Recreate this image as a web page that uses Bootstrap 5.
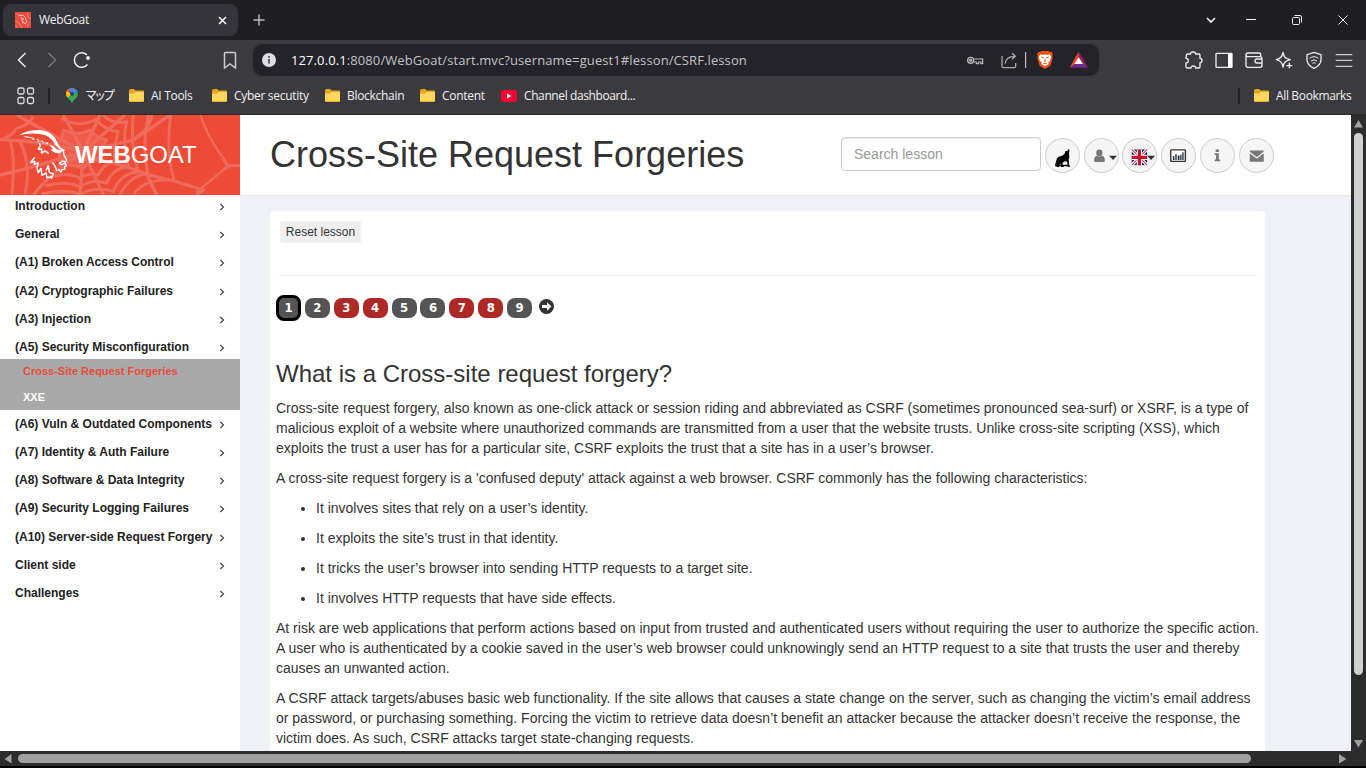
<!DOCTYPE html>
<html lang="en">
<head>
<meta charset="utf-8">
<title>WebGoat</title>
<link rel="stylesheet" href="https://cdn.jsdelivr.net/npm/bootstrap@5.3.0/dist/css/bootstrap.min.css">
<script src="https://cdn.jsdelivr.net/npm/bootstrap@5.3.0/dist/js/bootstrap.bundle.min.js"></script>
<style>
body{height:768px;width:1366px;background:#000;color:#333;font:14px/20px "Liberation Sans",Arial,sans-serif}
svg{display:block;flex:none}
.ui{font-family:"Open Sans","Noto Sans CJK JP",sans-serif;color:#f1f1f3;font-size:12px;white-space:nowrap}
.titlebar{height:40px;background:#1f1e23}
.tab{width:235px;height:32px;margin:4px 0 0 3px;border-radius:8px;background:#35343a}
.tab-icon{margin-left:12px}
.tab-name{margin-left:8px;letter-spacing:-.3px}
.tab-close{margin-right:11px}
.toolbar{height:40px;background:#3b3a3f}
.address{width:846px;height:32px;background:#242329;border-radius:9px;font-size:13px;color:#c3c2c8}
.address .site-info{margin:0 15px 0 9px}
.url{letter-spacing:.1px}
.marks{height:35px;background:#3b3a3f;border-bottom:1px solid #2b2a2f;padding-bottom:3px}
.apps{margin:0 13px 0 17px}
.map-mark{margin-left:16px;width:63px}
.map-mark .jp{letter-spacing:-3px;margin-left:7px}
.bm-label{letter-spacing:-.3px;margin-left:-1px}
.vbar{width:2px;height:16px;background:#222126}
.view{height:636px}
.side{width:240px}
.brand{height:80px;width:240px;position:relative}
.brand-text{position:absolute;left:75px;top:25px;font-size:24px;line-height:30px;color:#fff;letter-spacing:-.1px}
.lessons{margin-top:-3px}
.lesson{height:28.17px;padding:0 15px 0 15px;font-size:12px;font-weight:bold;color:#222;white-space:nowrap}
.chev{margin-top:2px}
.sublist{height:51px;margin-top:-2px;background:#a9a9a9;font-size:11px;font-weight:bold;color:#fff;padding:0 23px}
.sublist div{height:25.5px;line-height:26px}
.sublist .active{color:#e84c3d;line-height:25px}
.main{width:1111px;background:#f0f1f6}
.top{height:81px;background:#fff;border-bottom:1px solid #e4e5e9;padding-left:30px}
.top h1{font-size:36px;line-height:40px;width:571px;margin:20px 0 0;white-space:nowrap}
.find{width:200px;height:34px;margin-top:22px;border:1px solid #ccc;border-radius:4px;box-shadow:inset 0 1px 1px rgba(0,0,0,.075);padding:6px 12px;color:#999;background:#fff}
.round{width:35px;height:35px;border:1px solid #ccc;border-radius:50%;background:#f5f5f5;margin:23px 0 0 3.8px}
.round svg{margin:-1.5px -1px}
.sheet{width:995px;height:541px;margin:15px 0 0 30px;padding:10px 6px 0;background:#fff;border-radius:4px 4px 0 0;white-space:nowrap}
.reset{width:81px;height:22px;margin-left:4px;background:#efefef;border-radius:3px;font-size:12px;line-height:22px}
.rule{height:33px;width:984px;border-bottom:1px solid #f1f1f1;border-radius:0 0 4px 4px}
.pages{height:26px;margin-top:19px}
.pg{width:25px;height:20px;border-radius:8px;background:#545454;color:#fff;font:bold 14px/20px "DejaVu Sans Condensed","DejaVu Sans",sans-serif;font-stretch:condensed;margin-right:3.9px;text-align:center;font-size:13px}
.pg.red{background:#ac2925}
.pg.current{height:26px;line-height:20px;border:3px solid #000}
.next{margin:-3px 0 0 3px}
.sheet h2{font-size:24px;line-height:26px;margin:40px 0 11px}
.sheet p{margin:0 0 10px}
.sheet ul{padding-left:40px;margin:0}
.vscroll{width:15px;background:#2c2c2c}
.hscroll{height:15px;background:#2c2c2c}
</style>
</head>
<body class="m-0 overflow-hidden">
<svg width="0" height="0" class="position-absolute"><symbol id="folder" viewBox="0 0 15 13"><path d="M0 2Q0 0 1.500 0H5l1.500 1.500H14q1 0 1 1V12q0 1-1 1H1q-1 0-1-1z" fill="#e5a520"/><path d="M0 4.500h5L6.500 3H15v8.500q0 .8-1 .8H1q-1 0-1-.8z" fill="#ffd75e"/></symbol></svg>
<header class="ui">
 <div class="titlebar d-flex">
  <div class="tab d-flex align-items-center">
   <svg class="tab-icon" width="16" height="16" viewBox="0 0 16 16"><path fill="#e84c3d" d="M0 0h16v16H0z"/><path d="M0 9l4 2 3 5M12 0l1 5 3 2M1 2l3 1M0 13l3 3M15 10l-3 5" stroke="#f08075" fill="none"/><path d="M3.500 4c4-2 7 0 7.500 4l1 2-2 1.500-1.500-1L7 11.500M5.500 6l3 1-2 1.500 2 1.500" stroke="#fbdcd8" stroke-width=".9" fill="none"/></svg>
   <span class="tab-name flex-grow-1">WebGoat</span>
   <svg class="tab-close" width="9" height="9" viewBox="0 0 9 9"><path d="M1 1l7 7M8 1L1 8" stroke="#fff" stroke-width="1.500"/></svg>
  </div>
  <svg width="1128" height="40" viewBox="238 0 1128 40" fill="none" stroke="#eee"><path d="M253.500 20h11M259 14.500v11" stroke="#bbb" stroke-width="1.400"/><path d="M1207 18l4 4 4-4" stroke-width="1.700"/><path d="M1246 19.500h10"/><rect x="1292.500" y="17.500" width="7" height="7" rx="1"/><path d="M1294.500 15.500h5.500q1.500 0 1.500 1.500v5.500M1338.500 15.500l9 9M1347.500 15.500l-9 9"/></svg>
 </div>
 <div class="toolbar d-flex align-items-center">
  <svg width="253" height="40" viewBox="0 40 253 40" fill="none" stroke="#eee" stroke-width="1.500"><path d="M25.500 53L18.500 60l7 7"/><path d="M48.500 53l7 7-7 7" stroke="#77767b"/><path d="M87 55a7.300 7.300 0 1 0 .5 9.500"/><circle cx="88" cy="58" r="1.900" fill="#eee" stroke="none"/><path d="M224.500 53.500q0-1 1-1h9q1 0 1 1v14.500l-5.500-4-5.500 4z" stroke="#ccc"/></svg>
  <div class="address d-flex align-items-center">
   <svg class="site-info" width="14" height="14" viewBox="0 0 14 14"><circle cx="7" cy="7" r="7" fill="#dedde3"/><path d="M7 6v4.500M7 3v1.700" stroke="#36353b" stroke-width="1.600"/></svg>
   <span class="url flex-grow-1"><span class="text-white">127.0.0.1</span>:8080/WebGoat/start.mvc?username=guest1#lesson/CSRF.lesson</span>
   <svg width="139" height="32" viewBox="60 132 417 96" fill="none" stroke="#bbb" stroke-width="4">
    <circle cx="92" cy="181" r="9"/><circle cx="92" cy="181" r="3"/><path d="M101 177h27v14h-5v-5h-7v5h-7v-5h-8" stroke-width="3.500"/>
    <path d="M186 168v31q0 4 4 4h33q4 0 4-4v-10M195 191q3-22 29-22M216 160l10 9-10 9" stroke="#aaa"/>
    <path d="M257 156v48" stroke="#ddd" stroke-width="3"/>
    <path d="M300 156l5-3h20l5 3 4-1 5 8-2 6 1 5-7 23-16 10-16-10-7-23 1-5-2-6 5-8z" fill="#fb4f0c" stroke="none"/>
    <path d="M301 163l8 2 6-2 6 2 8-2 5 7-4 13-7 6 4 2-12 8-12-8 4-2-7-6-4-13z" fill="#fff" stroke="none"/><path d="M304 171l8 3M326 171l-8 3M315 176v10M310 190h10" stroke="#fb4f0c" stroke-width="3"/>
    <g stroke="none"><path d="M416 155l-27 48 27-17z" fill="#ff4724"/><path d="M416 155l28 48-28-17z" fill="#9e1f63"/><path d="M389 203h55l-28-20z" fill="#662d91"/><path d="M416 172l-13 20h26z" fill="#fff"/></g>
   </svg>
  </div>
  <svg width="267" height="40" viewBox="477 120 801 120" fill="none" stroke="#eee" stroke-width="4">
   <path d="M739 166q0-4 4-4h9c-2-7 14-9 15 0h9q4 0 4 4v9c8 0 8 13 0 13v12q0 4-4 4h-9c0-8-14-8-14 0h-11q-4 0-4-4v-11c9 0 9-14 0-14z" stroke-linejoin="round"/>
   <rect x="828" y="160" width="48" height="42" rx="2"/><path d="M864 160h12v42h-12z" fill="#fff" stroke="none"/>
   <path d="M918 165q0-6 6-6h33q5 0 5 6v4M918 165v31q0 6 6 6h36q6 0 6-6v-20q0-6-6-6h-36q-6 0-6-5zM966 177h-15q-6 0-6 6t6 6h15"/>
   <path d="M1029 157c3 15 7 19 22 22-15 4-19 8-22 22-3-14-7-18-20-22 13-4 17-8 20-22z" stroke-linejoin="round"/><path d="M1048 188v17M1039 197h18"/>
   <path d="M1122 157l21 7v15q0 16-21 26-21-10-21-26v-15z"/><path d="M1109 175q13-10 26 0M1113 183q9-7 18 0M1117 190q5-4 10 0" stroke-width="3"/>
   <path d="M1187 164h50M1187 181h50M1187 199h50" stroke-width="3.500" stroke="#ccc"/>
  </svg>
 </div>
 <div class="marks d-flex align-items-center">
  <svg class="apps" width="18" height="18" viewBox="0 0 18 18" fill="none" stroke="#ddd" stroke-width="1.300"><rect x="1" y="1" width="6" height="6" rx="1.500"/><rect x="10.500" y="1" width="6" height="6" rx="1.500"/><rect x="1" y="10.500" width="6" height="6" rx="1.500"/><rect x="10.500" y="10.500" width="6" height="6" rx="1.500"/></svg>
  <span class="vbar"></span>
  <span class="map-mark d-flex align-items-center"><svg width="12" height="16" viewBox="0 0 12 16"><path d="M6 16C5 11 0 10 0 6a6 6 0 0 1 12 0c0 4-5 5-6 10z" fill="#34a853"/><path d="M0 6a6 6 0 0 1 3-5.200L6 6 1.500 9.500Q0 8 0 6z" fill="#fbbc04"/><path d="M1 3a6 6 0 0 1 8-2L5 6z" fill="#ea4335"/><path d="M3 1a6 6 0 0 1 8.500 3L6 7z" fill="#4285f4"/><circle cx="6" cy="5.800" r="2.100" fill="#30456c"/></svg><span class="jp">マップ</span></span>
  <span class="d-flex align-items-center" style="width:83px"><svg class="me-2" width="15" height="13"><use href="#folder"/></svg><span class="bm-label">AI Tools</span></span>
  <span class="d-flex align-items-center" style="width:113px"><svg class="me-2" width="15" height="13"><use href="#folder"/></svg><span class="bm-label">Cyber secutity</span></span>
  <span class="d-flex align-items-center" style="width:95px"><svg class="me-2" width="15" height="13"><use href="#folder"/></svg><span class="bm-label">Blockchain</span></span>
  <span class="d-flex align-items-center" style="width:81px"><svg class="me-2" width="15" height="13"><use href="#folder"/></svg><span class="bm-label">Content</span></span>
  <span class="d-flex align-items-center flex-grow-1"><svg width="16" height="12" viewBox="0 0 16 12"><rect width="16" height="12" rx="3" fill="#f03"/><path d="M6 3.500v5L10.500 6z" fill="#fff"/></svg><span class="bm-label ps-2" style="letter-spacing:-.4px">Channel dashboard...</span></span>
  <span class="vbar"></span>
  <span class="d-flex align-items-center" style="margin-left:14px;width:112px"><svg class="me-2" width="15" height="13"><use href="#folder"/></svg><span class="bm-label" style="letter-spacing:-.35px">All Bookmarks</span></span>
 </div>
</header>
<div class="view d-flex overflow-hidden">
 <aside class="side bg-white">
  <div class="brand">
   <svg width="240" height="80" viewBox="0 15 720 240">
    <path fill="#ed4b36" d="M0 15h720v240H0z"/>
    <g fill="none" stroke="#f06a5b" stroke-width="9" stroke-linejoin="round">
     <path d="M250 125L190 15M250 125L300 15M250 125L375 15M250 125Q140 95 0 88M250 125Q130 60 50 15M250 125Q110 170 0 195M250 125Q150 190 100 255M250 125L240 255M250 125L310 255M250 125L400 90 510 15" stroke-width="10"/>
     <path d="M250 140Q380 165 440 193L522 213 610 240 590 255M440 193L470 255" stroke-width="10"/>
     <path d="M190 60Q235 80 270 60Q290 85 320 90Q300 120 305 150Q270 150 250 175Q215 160 180 170Q185 130 165 105Q190 85 190 60z" fill="#f06a5b" fill-opacity=".55"/>
     <path d="M185 25Q235 55 290 28Q310 60 355 65Q340 110 345 155Q310 160 295 195Q270 185 240 205Q205 185 160 200"/>
     <path d="M310 15Q335 45 380 35Q365 95 385 170Q335 175 320 220Q280 205 240 230Q190 210 135 228"/>
     <path d="M400 15Q390 110 415 185Q360 190 340 245Q290 228 240 252Q190 235 125 252"/>
     <path d="M445 15Q425 105 443 190Q385 200 360 255M455 15Q450 60 395 90"/>
     <path d="M0 90Q35 80 50 55Q85 45 100 20M30 92Q48 150 35 255M60 95Q95 160 75 255"/>
     <path d="M512 15Q497 120 522 210Q430 205 400 255" stroke-width="8"/>
     <path d="M602 15Q620 80 685 165L720 168M687 167Q645 200 588 248" stroke-width="7"/><path d="M665 145l22 18h33v8h-26l-38 18 20-20z" fill="#f06a5b" stroke="none"/>
    </g>
    <g fill="#fff"><path d="M57 76Q80 60 118 60Q160 63 173 100L182 113 195 120 190 126Q172 113 164 102Q151 75 119 72Q90 67 57 76z"/>
    <path d="M70 81Q78 77 88 81l16 3-10 6 23-3-6 9 19-5-3 10 17-5 1 9 15 3 9 10 21 4-8 5-18-2-13-17Q119 87 70 81z"/></g>
    <g fill="none" stroke="#fff" stroke-width="4.500" stroke-linejoin="bevel"><path d="M118 99l3 10-7 9 12-1-2 12 12-6 10 8M154 119l12 7 15 2M190 124l2 11 8 15-3 6-9-3-10 7 7 4 10-5 4 8-5 2 1 8-9 2-3 8-8-9"/><path d="M105 142l-14 16 14-4-3 10 13-6-4 15 4 16 8-15 3 22 12-7 3 14 12-3 1 6 6-14-12-5-3-21-7 16M158 158l8 12 5 13"/></g>
   </svg>
   <span class="brand-text"><b>WEB</b>GOAT</span>
  </div>
  <nav class="lessons position-relative" id="lessons"></nav>
 </aside>
 <main class="main">
  <div class="top d-flex">
   <h1>Cross-Site Request Forgeries</h1>
   <div class="find">Search lesson</div>
   <span class="round"><svg width="35" height="36" viewBox="647 54 100.500 103.400"><path d="M676 131l2-7 3-11 5-5 12-4 6-6 1-6 8-2 3-6 1 6-1 9 1 10-2 6 1 10-1 8 3 2v2h-6l-1-15-8-1-5 4-1 7 4 3v2h-8l-1-10-6 6 2 4h-8l1-6zM676 131h42v4h-42z"/></svg></span>
   <span class="round"><svg width="35" height="36" viewBox="758 54 100.500 103.400"><g fill="#777"><ellipse cx="802" cy="97" rx="9" ry="10"/><path d="M787 120q0-14 8-15 7 6 15 0 8 1 8 15 0 3-4 3h-23q-4 0-4-3z"/></g><path d="M830 105h23l-11.500 12z" fill="#333"/></svg></span>
   <span class="round"><svg width="35" height="36" viewBox="870 54 100.500 103.400"><path fill="#012169" d="M898 87h44v45h-44z"/><path d="M898 87l44 45M942 87l-44 45" stroke="#fff" stroke-width="9"/><path d="M898 87l44 45M942 87l-44 45" stroke="#e0354f" stroke-width="3"/><path d="M920 87v45M898 109.500h44" stroke="#fff" stroke-width="15"/><path d="M920 87v45M898 109.500h44" stroke="#c8102e" stroke-width="9"/><path d="M942 105h23l-11.500 12z" fill="#333"/></svg></span>
   <span class="round"><svg width="35" height="36" viewBox="982 54 100.500 103.400"><rect x="1010" y="88" width="42" height="33" rx="2" fill="#fff" stroke="#333" stroke-width="4"/><path d="M1018 117v-11M1025 117v-17M1032 117v-13M1039 117v-15M1045 117v-22" stroke="#333" stroke-width="4"/><path d="M1021.500 117v-8M1035.500 117v-11" stroke="#4c8fd6" stroke-width="3"/></svg></span>
   <span class="round"><svg width="35" height="36" viewBox="1092 54 100.500 103.400"><path d="M1137 87h9v7h-9zM1134 98h12v18h4v5h-16v-5h4v-13h-4z" fill="#777"/></svg></span>
   <span class="round"><svg width="35" height="36" viewBox="1203 54 100.500 103.400"><path d="M1234 90h40v3l-17 14q-3 2-6 0l-17-14zM1234 98l16 13q4 3 8 0l16-13v24h-40z" fill="#777"/></svg></span>
  </div>
  <section class="sheet">
   <div class="reset text-center">Reset lesson</div>
   <div class="rule"></div>
   <div class="pages d-flex align-items-center"><span class="pg current">1</span><span class="pg">2</span><span class="pg red">3</span><span class="pg red">4</span><span class="pg">5</span><span class="pg">6</span><span class="pg red">7</span><span class="pg red">8</span><span class="pg">9</span>
    <svg class="next" width="15" height="15" viewBox="0 0 15 15"><circle cx="7.500" cy="7.500" r="7.500" fill="#333"/><path d="M3 6h5V3.200l4.500 4.300L8 11.800V9H3z" fill="#fff"/></svg></div>
   <h2>What is a Cross-site request forgery?</h2>
   <p>Cross-site request forgery, also known as one-click attack or session riding and abbreviated as CSRF (sometimes pronounced sea-surf) or XSRF, is a type of<br>malicious exploit of a website where unauthorized commands are transmitted from a user that the website trusts. Unlike cross-site scripting (XSS), which<br>exploits the trust a user has for a particular site, CSRF exploits the trust that a site has in a user’s browser.</p>
   <p>A cross-site request forgery is a 'confused deputy' attack against a web browser. CSRF commonly has the following characteristics:</p>
   <ul><li><p>It involves sites that rely on a user’s identity.</p></li><li><p>It exploits the site’s trust in that identity.</p></li><li><p>It tricks the user’s browser into sending HTTP requests to a target site.</p></li><li><p>It involves HTTP requests that have side effects.</p></li></ul>
   <p>At risk are web applications that perform actions based on input from trusted and authenticated users without requiring the user to authorize the specific action.<br>A user who is authenticated by a cookie saved in the user’s web browser could unknowingly send an HTTP request to a site that trusts the user and thereby<br>causes an unwanted action.</p>
   <p>A CSRF attack targets/abuses basic web functionality. If the site allows that causes a state change on the server, such as changing the victim’s email address<br>or password, or purchasing something. Forcing the victim to retrieve data doesn’t benefit an attacker because the attacker doesn’t receive the response, the<br>victim does. As such, CSRF attacks target state-changing requests.</p>
  </section>
 </main>
 <div class="vscroll"><svg width="15" height="636" viewBox="1351 115 15 636"><path d="M1354 127.500l4.500-7.500 4.500 7.500zM1354 740h9l-4.500 7.500z" fill="#a0a0a0"/><rect x="1354" y="133" width="9" height="542" rx="4.500" fill="#d0d0d0"/></svg></div>
</div>
<div class="hscroll"><svg width="1366" height="15" viewBox="0 751 1366 15"><path d="M11.500 754v9.500L4.500 759zM1339 754v9.500l7.500-4.500z" fill="#a0a0a0"/><rect x="18" y="754" width="1233" height="9" rx="4.500" fill="#a0a0a0"/></svg></div>
<script>
const chevron='<svg class="chev" width="6" height="8" viewBox="0 0 6 8"><path d="M1.300 1L4.500 4 1.300 7" fill="none" stroke="#444" stroke-width="1.200"/></svg>';
const row=t=>'<div class="lesson d-flex align-items-center justify-content-between"><span>'+t+'</span>'+chevron+'</div>';
document.getElementById('lessons').innerHTML=
 ['Introduction','General','(A1) Broken Access Control','(A2) Cryptographic Failures','(A3) Injection','(A5) Security Misconfiguration'].map(row).join('')+
 '<div class="sublist"><div class="active">Cross-Site Request Forgeries</div><div>XXE</div></div>'+
 ['(A6) Vuln &amp; Outdated Components','(A7) Identity &amp; Auth Failure','(A8) Software &amp; Data Integrity','(A9) Security Logging Failures','(A10) Server-side Request Forgery','Client side','Challenges'].map(row).join('');
</script>
</body>
</html>
